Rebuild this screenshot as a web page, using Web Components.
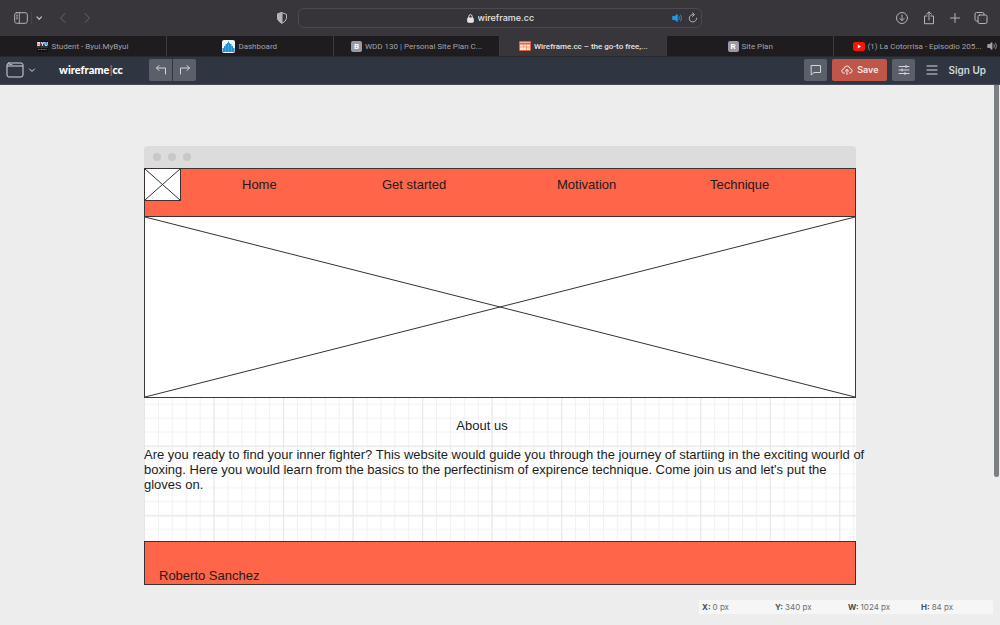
<!DOCTYPE html>
<html lang="en">
<head>
<meta charset="utf-8">
<title>Wireframe.cc – the go-to free, minimal wireframing tool</title>
<style>
  html, body { height: 100%; }
  body { margin: 0; display: flex; flex-direction: column; background: #ededed; font-family: Inter, "Liberation Sans", sans-serif; }
  wire-canvas { flex: 1; }
</style>
</head>
<body>
<browser-bar></browser-bar>
<tab-strip>
  <browser-tab icon="byu">Student - Byui.MyByui</browser-tab>
  <browser-tab icon="dash">Dashboard</browser-tab>
  <browser-tab icon="B">WDD 130 | Personal Site Plan C...</browser-tab>
  <browser-tab icon="wire" active>Wireframe.cc – the go-to free,...</browser-tab>
  <browser-tab icon="R">Site Plan</browser-tab>
  <browser-tab icon="tube" sound>(1) La Cotorrisa - Episodio 205...</browser-tab>
</tab-strip>
<app-toolbar></app-toolbar>
<wire-canvas>
  <wire-window>
    <wire-nav>
      <a href="#home">Home</a>
      <a href="#start">Get started</a>
      <a href="#motivation">Motivation</a>
      <a href="#technique">Technique</a>
    </wire-nav>
    <wire-image></wire-image>
    <wire-about>
      <span slot="title">About us</span>
      Are you ready to find your inner fighter? This website would guide you through the journey of startiing in the exciting wourld of boxing. Here you would learn from the basics to the perfectinism of expirence technique. Come join us and let's put the gloves on.
    </wire-about>
    <wire-footer>Roberto Sanchez</wire-footer>
  </wire-window>
  <status-bar slot="status"></status-bar>
</wire-canvas>

<script>
const define = (name, html) => customElements.define(name, class extends HTMLElement {
  constructor() {
    super();
    this.attachShadow({ mode: "open" }).innerHTML = html;
  }
});

const reset = `
  * { box-sizing: border-box; }
  svg { display: block; fill: none; stroke: currentColor; stroke-linecap: round; stroke-linejoin: round; flex: none; }
  button { margin: 0; padding: 0; border: 0; background: none; color: inherit; font: inherit; display: flex; align-items: center; justify-content: center; }
`;

define("browser-bar", `
<style>${reset}
  :host { display: grid; grid-template-columns: 1fr 40.4% 1fr; height: 36px; flex: none; align-items: center; background: #38363b; color: #b4b3b7; }
  .side { display: flex; align-items: center; }
  .left { padding: 0 10px 0 14px; }
  .split { width: 1px; height: 12px; margin: 0 3px; background: #454348; }
  .nav { color: #67656b; margin-left: 14px; }
  .nav + .nav { margin-left: 12px; }
  .shield { margin-left: auto; }
  .field { display: grid; grid-template-columns: 32px 1fr 32px; align-items: center; height: 20px; border: 1px solid #4c4a50; border-radius: 6px; background: #363439; }
  .address { grid-column: 2; display: flex; align-items: center; justify-content: center; gap: 4px; color: #e4e3e6; }
  input { width: 56px; padding: 0; border: 0; background: none; color: inherit; font: 500 9px/14px Inter, sans-serif; outline: 0; }
  .actions { display: flex; align-items: center; justify-content: flex-end; gap: 4px; padding-right: 2px; }
  .right { justify-content: flex-end; gap: 13px; padding-right: 12px; }
</style>
<div class="side left">
  <button aria-label="Sidebar"><svg width="14" height="12" viewBox="0 0 14 12"><rect x=".7" y=".7" width="12.6" height="10.6" rx="2"/><path d="M5.3 1v10M2.500 3.300h1M2.500 5h1M2.500 6.700h1" stroke-width=".9"/></svg></button>
  <span class="split"></span>
  <button aria-label="Tab groups"><svg width="8" height="8" viewBox="0 0 8 8" stroke-width="1.300"><path d="M2 3l2.200 2.200L6.400 3"/></svg></button>
  <button class="nav" aria-label="Back"><svg width="12" height="12" viewBox="0 0 12 12"><path d="M8 1.500L3.500 6L8 10.500"/></svg></button>
  <button class="nav" aria-label="Forward"><svg width="12" height="12" viewBox="0 0 12 12"><path d="M4 1.500L8.500 6L4 10.500"/></svg></button>
  <button class="shield" aria-label="Privacy report"><svg width="12" height="12" viewBox="0 0 12 12"><path d="M6 .8L10.500 2.300V6.200Q10.300 9.300 6 11.300Q1.700 9.300 1.500 6.200V2.300Z"/><path d="M6 .8V11.300Q1.700 9.300 1.500 6.200V2.300Z" fill="currentColor"/></svg></button>
</div>
<div class="field">
  <div class="address">
    <svg width="7" height="9" viewBox="0 0 7 9"><rect x=".7" y="4" width="5.600" height="4.300" rx=".6" fill="currentColor"/><path d="M1.800 4V2.500Q1.900 .7 3.500 .7T5.200 2.500V4"/></svg>
    <input aria-label="Address" value="wireframe.cc">
  </div>
  <div class="actions">
    <button aria-label="Mute"><svg width="11" height="10" viewBox="0 0 11 10" color="#1c9df3"><path d="M.7 3.500H2.500L5.300 1.500V8.500L2.500 6.500H.7Z" fill="currentColor" stroke-width=".8"/><path d="M7 3.300Q8 5 7 6.700M8.700 2Q10.600 5 8.700 8" stroke-width=".8"/></svg></button>
    <button aria-label="Reload"><svg width="12" height="12" viewBox="0 0 12 12"><path d="M6.300 2.500A3.700 3.700 0 1 0 9.700 6.200M5.500 .8L7.500 2.600L5.500 4.400"/></svg></button>
  </div>
</div>
<div class="side right">
  <button aria-label="Downloads"><svg width="14" height="14" viewBox="0 0 14 14"><circle cx="7" cy="7" r="5.500"/><path d="M7 4v5.500M4.800 7.400L7 9.600L9.200 7.400"/></svg></button>
  <button aria-label="Share"><svg width="14" height="14" viewBox="0 0 14 14"><path d="M5 5H2.500V12.700H11.500V5H9M7 9V1M4.600 3.200L7 1L9.400 3.200"/></svg></button>
  <button aria-label="New tab"><svg width="12" height="12" viewBox="0 0 12 12"><path d="M6 1.500v9M1.500 6h9"/></svg></button>
  <button aria-label="Tab overview"><svg width="14" height="14" viewBox="0 0 14 14"><rect x="4" y="4" width="9" height="8.500" rx="1.500"/><path d="M4 10H2.500Q1 10 1 8.500V3Q1 1.500 2.500 1.500H8.500Q10 1.500 10 3V4"/></svg></button>
</div>`);

define("tab-strip", `
<style>
  :host { display: flex; flex: none; height: 20px; background: #1e1c1f; }
</style><slot></slot>`);

const tabIcons = {
  byu: `<svg width="11" height="11" viewBox="0 0 11 11"><rect width="11" height="11" fill="#111"/><text x="5.500" y="5" text-anchor="middle" font-size="5" font-weight="900" font-family="Inter" fill="#fff">BYU</text><path d="M0 6h11" stroke="#888" stroke-width=".6"/><path d="M1 8.500h9" stroke="#777" stroke-dasharray="1 .5"/></svg>`,
  dash: `<svg width="13" height="13" viewBox="0 0 13 13"><rect width="13" height="13" rx="2" fill="#eef4f8"/><path d="M.5 12V8H2V6H3.500V4H5V3H6V1.500H7V3H8V4H9.500V6H11V8H12.500V12Z" fill="#258fd0"/><path d="M3.500 6v6M6.500 4v8M9.500 6v6" stroke="#61b4e5" stroke-width=".5"/></svg>`,
  wire: `<svg width="12" height="10" viewBox="0 0 12 10"><rect width="12" height="10" rx="1" fill="#e9603f"/><path d="M1 3.500H11V9H1Z" fill="#ffe1d7"/><path d="M1 1.500h10" stroke="#f9ae98"/><path d="M1 6h10M4.500 3.500V6M7.500 3.500V9" stroke="#ec8266" stroke-width=".7"/></svg>`,
  tube: `<svg width="12" height="9" viewBox="0 0 12 9"><rect width="12" height="9" rx="2" fill="#f5150c"/><path d="M4.800 2.500L8 4.500L4.800 6.500Z" fill="#fff"/></svg>`
};

customElements.define("browser-tab", class extends HTMLElement {
  constructor() {
    super();
    const key = this.getAttribute("icon");
    const icon = tabIcons[key] || `<b>${key}</b>`;
    const sound = this.hasAttribute("sound")
      ? `<svg class="sound" width="11" height="10" viewBox="0 0 11 10" stroke="currentColor" fill="none" stroke-linecap="round"><path d="M1 3.500H2.500L5 1.500V8.500L2.500 6.500H1Z" fill="currentColor" stroke-width=".8"/><path d="M7 3.500Q8 5 7 6.500M8.700 2.200Q10.300 5 8.700 7.800" stroke-width=".8"/></svg>` : "";
    this.attachShadow({ mode: "open" }).innerHTML = `
<style>
  * { box-sizing: border-box; }
  :host { flex: 1 1 0; min-width: 0; position: relative; display: flex; border-right: 1px solid #3c3a3e; color: #a5a3a8; font: 400 8px/12px Roboto, sans-serif; }
  :host(:last-child) { border-right: 0; }
  :host([active]) { background: #38363b; color: #e6e5e8; font-weight: 500; }
  button { flex: 1; min-width: 0; display: flex; align-items: center; justify-content: center; gap: 3px; margin: 0; padding: 0; border: 0; background: none; color: inherit; font: inherit; white-space: nowrap; }
  span { padding-top: 1px; }
  svg { display: block; flex: none; }
  .sound { position: absolute; right: 2px; top: 5px; }
  b { width: 11px; height: 11px; border-radius: 2px; background: #9a99a5; color: #fff; font-size: 8px; line-height: 11px; }
</style>
<button role="tab">${icon}<span><slot></slot></span></button>${sound}`;
  }
});

define("app-toolbar", `
<style>${reset}
  :host { display: flex; box-sizing: border-box; align-items: center; flex: none; height: 29px; padding: 0 14px 1px 6px; background: #303641; border-top: 1px solid #28292f; border-bottom: 1px solid #454a57; color: #d4d6da; font: 600 10px/14px Inter, sans-serif; }
  .caret { margin: 0 22px 0 3px; }
  .brand { min-width: 64px; color: #fff; font: 900 11px/14px Lato, sans-serif; text-decoration: none; }
  .brand i { color: #e8513d; font-style: normal; }
  .group { display: flex; gap: 1px; margin-left: 26px; }
  .group button { width: 23px; height: 22px; background: #5a5f69; }
  .group button:first-child { border-radius: 2px 0 0 2px; }
  .group button:last-child { border-radius: 0 2px 2px 0; }
  .right { display: flex; align-items: center; gap: 5px; margin-left: auto; }
  .right > button { width: 23px; height: 22px; border-radius: 2px; background: #5a5f69; }
  .right > .save { width: 55px; gap: 4px; background: #c0564a; color: #f6e4e1; font-size: 9px; }
  .right > .menu { background: none; }
  a { color: inherit; text-decoration: none; }
</style>
<button aria-label="Device"><svg width="18" height="16" viewBox="0 0 18 16"><rect x="1" y="1" width="16" height="14" rx="2"/><path d="M1.500 4H16.500" stroke-width="1.200"/><path d="M3 2.500h3" stroke-width=".7"/></svg></button>
<button class="caret" aria-label="Choose device"><svg width="10" height="10" viewBox="0 0 10 10"><path d="M2.500 4L5 6.500L7.500 4"/></svg></button>
<a class="brand" href="#">wireframe<i>|</i>cc</a>
<div class="group">
  <button aria-label="Undo"><svg width="12" height="12" viewBox="0 0 12 12"><path d="M4 1.500L1.500 4L4 6.500M1.500 4H10.500V10"/></svg></button>
  <button aria-label="Redo"><svg width="12" height="12" viewBox="0 0 12 12"><path d="M8 1.500L10.500 4L8 6.500M10.500 4H1.500V10"/></svg></button>
</div>
<div class="right">
  <button aria-label="Comments"><svg width="12" height="12" viewBox="0 0 12 12"><path d="M1.500 1.500H10.500V8.500H4L1.500 10.700Z"/></svg></button>
  <button class="save"><svg width="12" height="12" viewBox="0 0 12 12"><path d="M3.500 9.200H3Q.8 9 .8 6.900Q1 5 3 4.800Q3.500 2 6.200 2Q8.600 2.200 9 4.600Q11.200 5 11.200 7Q11 9.200 8.500 9.200M6 10.500V5.500M4.200 7.200L6 5.500L7.800 7.200"/></svg>Save</button>
  <button aria-label="Settings"><svg width="12" height="12" viewBox="0 0 12 12"><path d="M1 2.500h10M1 6h10M1 9.500h10M8 1.300v2.400M4 4.800v2.400M7 8.300v2.400"/></svg></button>
  <button class="menu" aria-label="Menu"><svg width="12" height="12" viewBox="0 0 12 12" stroke-width="1.200"><path d="M1 2h10M1 6h10M1 10h10"/></svg></button>
  <a href="#signup">Sign Up</a>
</div>`);

define("wire-canvas", `
<style>
  :host { position: relative; display: flex; flex-direction: column; align-items: center; padding: 61px 8px 0; background: #ededed; }
  .thumb { position: absolute; top: 0; right: 1px; width: 5px; height: 72.600%; border-radius: 0 0 3px 3px; background: #7c7e85; }
  ::slotted(status-bar) { position: absolute; right: 7px; bottom: 11px; }
</style>
<slot></slot><slot name="status"></slot><div class="thumb"></div>`);

define("wire-window", `
<style>
  :host { display: block; width: 100%; max-width: 712px; color: #1c1c1c; font: 13px/15px "Liberation Sans", Arial, sans-serif; }
  header { display: flex; align-items: center; gap: 7px; height: 22px; padding: 0 9px; border-radius: 4px 4px 0 0; background: #dcdcdc; }
  i { width: 8px; height: 8px; border-radius: 50%; background: #c8c8c8; }
</style>
<header><i></i><i></i><i></i></header><slot></slot>`);

const cross = `<svg viewBox="0 0 100 100" preserveAspectRatio="none" aria-hidden="true"><path d="M0 0L100 100M0 100L100 0" vector-effect="non-scaling-stroke"/></svg>`;

define("wire-nav", `
<style>
  * { box-sizing: border-box; }
  :host { display: flex; box-sizing: border-box; height: 49px; background: #ff6548; border: 1px solid #3a3332; }
  .logo { width: 36px; height: 32px; background: #fff; border: solid #3a3332; border-width: 0 1px 1px 0; }
  svg { display: block; width: 100%; height: 100%; stroke: #333; fill: none; }
  nav { flex: 1; display: grid; grid-template-columns: 140fr 175fr 153fr 145fr; padding: 8px 0 0 61px; }
  ::slotted(a) { color: inherit; text-decoration: none; }
</style>
<div class="logo">${cross}</div><nav><slot></slot></nav>`);

define("wire-image", `
<style>
  :host { display: block; box-sizing: border-box; aspect-ratio: 712 / 181; background: #fff; border: solid #3a3a3a; border-width: 0 1px 1px; }
  svg { display: block; width: 100%; height: 100%; stroke: #333; fill: none; }
</style>${cross}`);

define("wire-about", `
<style>
  :host { display: block; box-sizing: border-box; position: relative; min-height: 143px; padding: 20px 0 48px; background: #fff; }
  svg { position: absolute; inset: 0; width: 100%; height: 100%; }
  h2, p { position: relative; margin: 0; font: inherit; }
  h2 { padding-right: 36px; text-align: center; }
  p { margin: 14px -10px 0 0; }
</style>
<svg viewBox="0 0 1024 206" preserveAspectRatio="xMinYMin slice" aria-hidden="true">
  <defs>
    <pattern id="minor" width="20" height="20" y="-1" patternUnits="userSpaceOnUse"><path d="M.7 0V20M0 10H20" stroke="#f1f1f1" stroke-width="1.400"/></pattern>
    <pattern id="major" width="100" height="100" patternUnits="userSpaceOnUse"><path d="M.7 0V100M0 69.500H100" stroke="#e6e6e6" stroke-width="1.400"/></pattern>
  </defs>
  <rect width="1024" height="206" fill="url(#minor)"/><rect width="1024" height="206" fill="url(#major)"/>
</svg>
<h2><slot name="title"></slot></h2>
<p><slot></slot></p>`);

define("wire-footer", `
<style>
  :host { display: flex; align-items: flex-end; box-sizing: border-box; height: 44px; padding: 0 14px 1px; background: #ff6548; border: 1px solid #3a3332; }
</style><slot></slot>`);

define("status-bar", `
<style>
  :host { display: block; width: 294px; }
  dl { display: grid; grid-template-columns: repeat(4, 73px); margin: 0; padding-left: 3px; background: #f6f6f6; color: #6e6e6e; font: 8px/14px Inter, sans-serif; }
  div { display: flex; gap: 2px; }
  dt { font-weight: 700; color: #4c4c4c; }
  dd { margin: 0; }
</style>
<dl><div><dt>X:</dt><dd>0 px</dd></div><div><dt>Y:</dt><dd>340 px</dd></div><div><dt>W:</dt><dd>1024 px</dd></div><div><dt>H:</dt><dd>84 px</dd></div></dl>`);
</script>
</body>
</html>
